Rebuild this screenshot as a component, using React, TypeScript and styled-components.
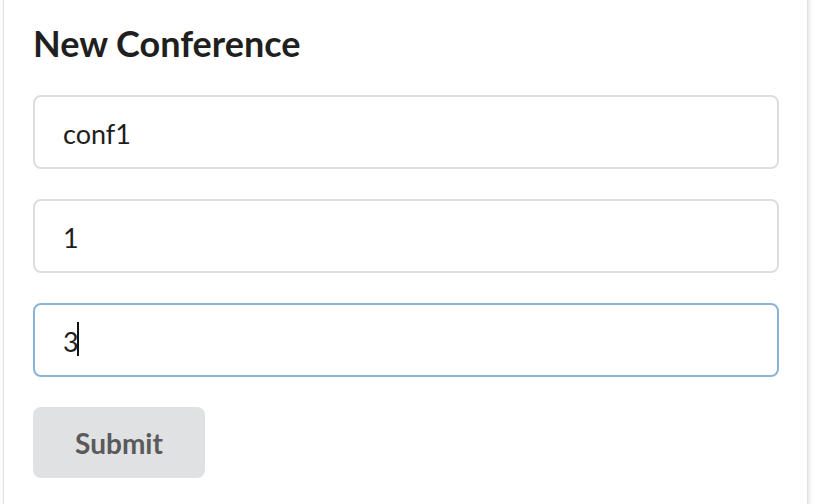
import React from "react";
import styled, { createGlobalStyle } from "styled-components";

const Global = createGlobalStyle`
  html, body { margin: 0; padding: 0; background: #fff; overflow: hidden; }
  body { font-family: Lato, "Helvetica Neue", Arial, sans-serif; }
`;

const Page = styled.div`
  width: 814px;
  height: 504px;
  overflow: hidden;
  padding: 0 6px 0 3px;
  box-sizing: border-box;
`;

const Card = styled.div`
  margin-top: -12px;
  height: 560px;
  box-sizing: border-box;
  background: #fff;
  border: 1px solid #e2e2e3;
  border-radius: 8px;
  box-shadow: 1px 2px 4px rgba(34, 36, 38, 0.15);
  padding: 32px 28px 0 29px;
`;

const Title = styled.h2`
  margin: 0 0 30px 0;
  font-family: Lato, sans-serif;
  font-weight: 700;
  font-size: 36px;
  line-height: 44px;
  color: #1f1f1f;
`;

const Form = styled.form`
  display: flex;
  flex-direction: column;
  align-items: flex-start;
  gap: 30px;
`;

const Field = styled.div`
  position: relative;
  width: 100%;
`;

const Input = styled.input<{ $focused?: boolean }>`
  display: block;
  width: 100%;
  height: 74px;
  box-sizing: border-box;
  margin: 0;
  padding: 2px 28px 0;
  font-family: Lato, sans-serif;
  font-size: 27px;
  color: #1e1e1e;
  background: #fff;
  border: 2px solid ${(p) => (p.$focused ? "#8bb4d6" : "#dedede")};
  border-radius: 8px;
  outline: none;
  caret-color: transparent;
`;

const Caret = styled.span`
  position: absolute;
  left: 44px;
  top: 19px;
  width: 2px;
  height: 34px;
  background: #111;
`;

const Button = styled.button`
  width: 172px;
  height: 71px;
  margin-top: 0;
  border: none;
  border-radius: 8px;
  background: #e0e1e2;
  color: #5a5a5a;
  font-family: Lato, sans-serif;
  font-weight: 700;
  font-size: 28px;
  cursor: pointer;
`;

export default function App() {
  return (
    <>
      <Global />
      <Page>
        <Card>
          <Title>New Conference</Title>
          <Form onSubmit={(e) => e.preventDefault()}>
            <Field>
              <Input readOnly value="conf1" />
            </Field>
            <Field>
              <Input readOnly value="1" />
            </Field>
            <Field>
              <Input readOnly value="3" $focused />
              <Caret />
            </Field>
            <Button type="submit">Submit</Button>
          </Form>
        </Card>
      </Page>
    </>
  );
}
